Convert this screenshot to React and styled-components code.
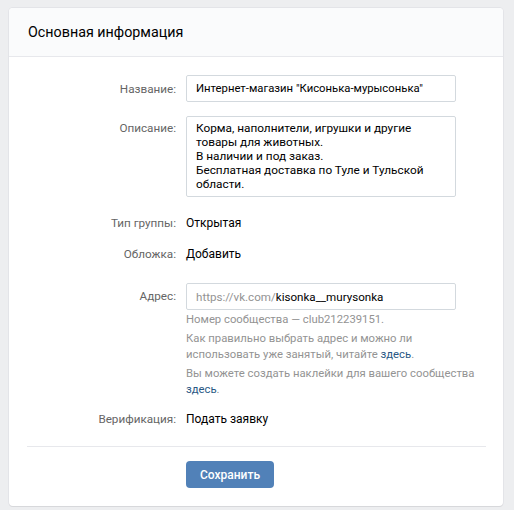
import { createGlobalStyle } from "styled-components";
import styled from "styled-components";

const GlobalStyle = createGlobalStyle`
  html, body {
    margin: 0;
    padding: 0;
    background: #edeef0;
  }
  body {
    font-family: Roboto, "Open Sans", "Liberation Sans", sans-serif;
    font-size: 11.7px;
    color: #000;
  }
  * { box-sizing: border-box; }
`;

const Page = styled.div`
  padding: 8px 11px 8px 9px;
`;

const Card = styled.section`
  width: 494px;
  background: #fff;
  border-radius: 4px;
  box-shadow: 0 1px 0 0 #d7d8db, 0 0 0 1px #e3e4e8;
  overflow: hidden;
`;

const Header = styled.div`
  height: 49px;
  padding: 0 19px;
  display: flex;
  align-items: center;
  background: #fafbfc;
  border-bottom: 1px solid #e7e8ec;
  font-size: 14.3px;
  color: #000;
`;

const Body = styled.div`
  padding: 18px 0 18px;
`;

const Row = styled.div`
  display: grid;
  grid-template-columns: 167px 1fr;
  column-gap: 10px;
  align-items: ${(p) => (p.$top ? "start" : "center")};
  margin-top: ${(p) => p.$mt || 0}px;
`;

const Label = styled.div`
  text-align: right;
  color: #656565;
  line-height: 16px;
  padding-top: ${(p) => p.$pt || 0}px;
`;

const Value = styled.div`
  line-height: 16px;
  color: #000;
  font-size: 12px;
`;

const Input = styled.input`
  width: 270px;
  height: 27px;
  padding: 0 9px;
  border: 1px solid #d3d9de;
  border-radius: 2px;
  font: inherit;
  font-size: 11.3px;
  color: #000;
  outline: none;
`;

const TextArea = styled.textarea`
  display: block;
  width: 270px;
  height: 81px;
  padding: 4px 9px 5px;
  border: 1px solid #d3d9de;
  border-radius: 2px;
  font: inherit;
  font-size: 11.8px;
  line-height: 14px;
  color: #000;
  resize: none;
  overflow: hidden;
  outline: none;
`;

const AddressField = styled.label`
  width: 270px;
  height: 27px;
  padding: 0 9px;
  display: flex;
  align-items: center;
  border: 1px solid #d3d9de;
  border-radius: 2px;
  font-size: 11.6px;
  cursor: text;
`;

const Prefix = styled.span`
  color: #939393;
  white-space: nowrap;
`;

const AddressInput = styled.input`
  flex: 1;
  min-width: 0;
  border: 0;
  padding: 0;
  font: inherit;
  color: #000;
  outline: none;
`;

const Hints = styled.div`
  width: 300px;
  margin-top: 2px;
  font-size: 11.3px;
`;

const Hint = styled.p`
  margin: ${(p) => (p.$first ? 0 : 3)}px 0 0;
  line-height: 16px;
  color: #939393;
`;

const Link = styled.a`
  color: #2a5885;
  text-decoration: none;
`;

const Divider = styled.hr`
  margin: 19px 17px 0 18px;
  border: 0;
  border-top: 1px solid #e7e8ec;
`;

const Actions = styled.div`
  padding: 14px 0 0 177px;
`;

const Button = styled.button`
  width: 88px;
  height: 27px;
  border: 0;
  border-radius: 4px;
  background: #5181b8;
  color: #fff;
  font: inherit;
  font-size: 12px;
  font-weight: 500;
  cursor: pointer;
`;

const description =
  "Корма, наполнители, игрушки и другие\nтовары для животных.\nВ наличии и под заказ.\nБесплатная доставка по Туле и Тульской\nобласти.";

export default function App() {
  return (
    <Page>
      <GlobalStyle />
      <Card>
        <Header>Основная информация</Header>
        <Body>
          <Row>
            <Label>Название:</Label>
            <Input defaultValue={'Интернет-магазин "Кисонька-мурысонька"'} />
          </Row>
          <Row $top $mt={14}>
            <Label $pt={4}>Описание:</Label>
            <TextArea defaultValue={description} />
          </Row>
          <Row $mt={18}>
            <Label>Тип группы:</Label>
            <Value>Открытая</Value>
          </Row>
          <Row $mt={15}>
            <Label>Обложка:</Label>
            <Value>Добавить</Value>
          </Row>
          <Row $top $mt={21}>
            <Label $pt={5}>Адрес:</Label>
            <div>
              <AddressField>
                <Prefix>https://vk.com/</Prefix>
                <AddressInput defaultValue="kisonka__murysonka" />
              </AddressField>
              <Hints>
                <Hint $first>Номер сообщества — club212239151.</Hint>
                <Hint>
                  Как правильно выбрать адрес и можно ли использовать уже занятый, читайте{" "}
                  <Link href="#">здесь</Link>.
                </Hint>
                <Hint>
                  Вы можете создать наклейки для вашего сообщества <Link href="#">здесь</Link>.
                </Hint>
              </Hints>
            </div>
          </Row>
          <Row $mt={13}>
            <Label>Верификация:</Label>
            <Value>Подать заявку</Value>
          </Row>
          <Divider />
          <Actions>
            <Button>Сохранить</Button>
          </Actions>
        </Body>
      </Card>
    </Page>
  );
}
